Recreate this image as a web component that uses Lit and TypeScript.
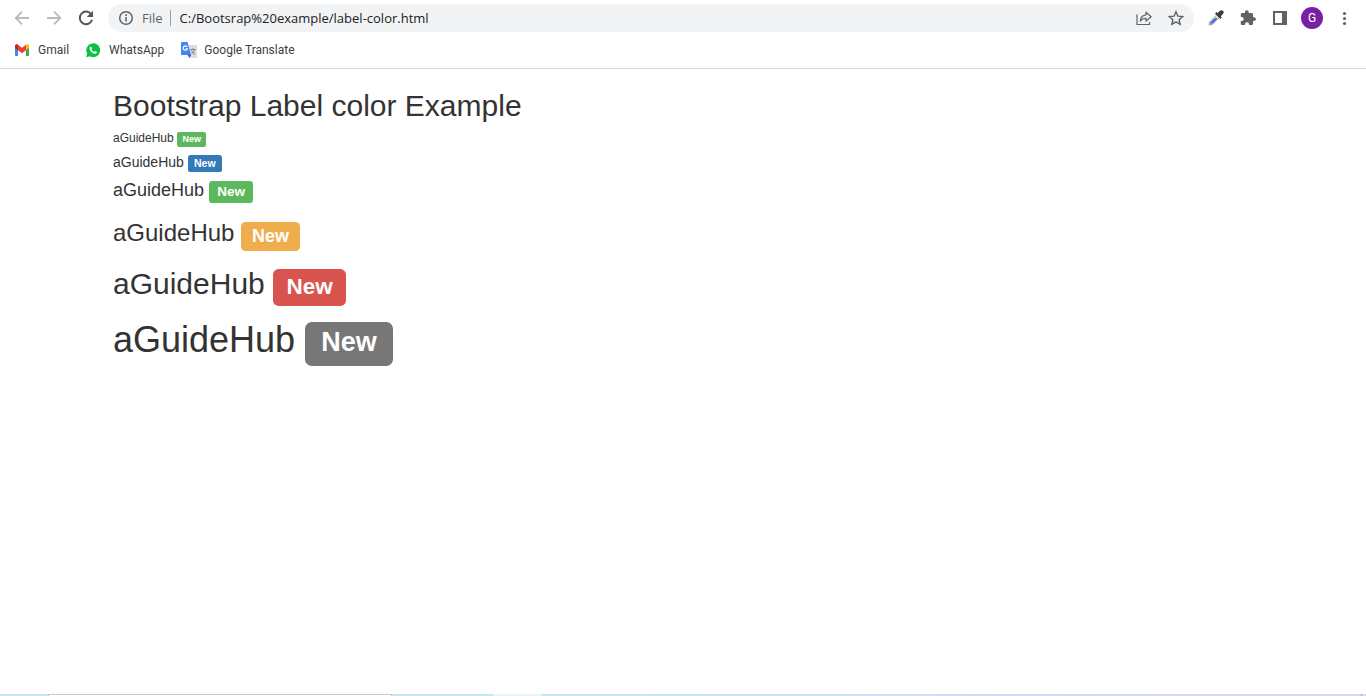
import { LitElement, html, css, svg } from "lit";
import { customElement, property } from "lit/decorators.js";

const icons = {
  back: svg`<path d="M17 10H4M10 3.700 3.700 10l6.300 6.300" fill="none" stroke="#babcbe" stroke-width="1.800"/>`,
  forward: svg`<path d="M3 10H16M10 3.700 16.300 10 10 16.300" fill="none" stroke="#babcbe" stroke-width="1.800"/>`,
  reload: svg`<path d="M15.300 6.300A6.300 6.300 0 1 0 16.100 11.800" fill="none" stroke="#54585d" stroke-width="2"/><path d="M17 2.700V9H10.700Z" fill="#54585d"/>`,
  info: svg`<circle cx="10" cy="10" r="6.300" fill="none" stroke="#5f6368" stroke-width="1.500"/><path d="M10 9v4.500M10 6.300v1.700" stroke="#5f6368" stroke-width="1.600"/>`,
  share: svg`<path d="M3 6.500v10h12.500V14" fill="none" stroke="#5f6368" stroke-width="1.200"/><path d="M12 4.200 17.200 8.700 12 13v-2.600c-2.700 0-4.500.8-5.800 2.700.3-3.300 2.300-5.800 5.800-6.300Z" fill="none" stroke="#5f6368" stroke-width="1.200" stroke-linejoin="round"/>`,
  star: svg`<path d="m10 3.700 1.900 4.400 4.800.4-3.600 3.200 1.100 4.700-4.200-2.500-4.200 2.500 1.100-4.700-3.600-3.200 4.800-.4Z" fill="none" stroke="#5f6368" stroke-width="1.400"/>`,
  dropper: svg`<path d="m3 17 .8-3.200 7-7 2.600 2.600-7 7Z" fill="#dfe3ec" stroke="#8a8d94" stroke-width=".8"/><path d="m4 16 .8-1.900 4-3.900h3l-5 5Z" fill="#3b63d8"/><path d="m9 5.500 1.500-1.500 1.200 1.100 2-2.100c1-1 2.500-.9 3.300-.2.900.9.900 2.300-.1 3.300l-2.100 2.100 1 1.200-1.500 1.500Z" fill="#383b40"/>`,
  puzzle: svg`<path d="M16 9.200h-1V6.300c0-.8-.6-1.400-1.400-1.400h-2.900v-.8a1.900 1.900 0 0 0-3.800 0v.8H4.200c-.8 0-1.400.6-1.400 1.400V9h.9a2 2 0 0 1 0 4h-.9v2.700c0 .8.600 1.400 1.400 1.400H7v-.8a2 2 0 0 1 4 0v.8h2.600c.8 0 1.400-.6 1.400-1.400V13h1a1.900 1.900 0 0 0 0-3.800Z" fill="#5f6368"/>`,
  panel: svg`<path d="M3 3h14v14H3Z M5 5v10h7V5Z" fill="#5f6368" fill-rule="evenodd"/>`,
  menu: svg`<g fill="#5f6368"><circle cx="10.500" cy="5.500" r="1.600"/><circle cx="10.500" cy="10.500" r="1.600"/><circle cx="10.500" cy="15.500" r="1.600"/></g>`,
  gmail: svg`<path d="M3 5.500h3V16H4a1 1 0 0 1-1-1Z" fill="#4285f4"/><path d="M14 5.500h3V15a1 1 0 0 1-1 1h-2Z" fill="#34a853"/><path d="M3 6c0-1.700 1.700-2.300 3-1.300v5.500L3 8Z" fill="#c5221f"/><path d="m6 4.700 4 3 4-3v5.500l-4 3-4-3Z" fill="#ea4335"/><path d="M14 4.700c1.300-1 3-.4 3 1.300v2l-3 2.200Z" fill="#fbbc04"/>`,
  whatsapp: svg`<path d="M3.200 17.200 4.200 13.600A6.900 6.900 0 1 1 6.800 16.200Z" fill="#0ac143"/><path d="M7.900 6.500c-.6 0-1.300.8-1.300 1.900 0 2.200 3.300 5.300 5.400 5.300 1.200 0 2-.8 2-1.700l-2-1.100-1 1c-1-.4-2-1.300-2.500-2.400l.7-.9Z" fill="#fff"/>`,
  translate: svg`<path d="M9 5h9.200c.4 0 .8.400.8.800v11.400c0 .4-.4.800-.8.800H11.500Z" fill="#dadce0"/><path d="M3.800 2h5.700L13 15H3.800a.8.800 0 0 1-.8-.8V2.800c0-.4.400-.8.800-.8Z" fill="#4285f4"/><path d="M9.500 15H13l-1.500 3Z" fill="#2a56c6"/><path d="M9.300 7A2.200 2.200 0 1 0 9.500 8.700H7.500" fill="none" stroke="#fff" stroke-width="1.100"/><path d="M12.500 9.500h5M15 8.300v1.200M16.500 9.500c-.4 2-1.800 3.500-3 4.300M13.500 10.500c.6 1.600 1.900 2.800 3.500 3.800" fill="none" stroke="#607d8b" stroke-width=".9"/>`,
};

const glyph = (name: keyof typeof icons) =>
  html`<svg viewBox="0 0 20 20" width="20" height="20" aria-hidden="true">${icons[name]}</svg>`;

@customElement("browser-bar")
export class BrowserBar extends LitElement {
  static styles = css`
    :host {
      display: block;
      border-bottom: 1px solid #dadce0;
      font-family: "Open Sans", "Noto Sans", sans-serif;
      color: #3c4043;
    }
    svg { display: block; }
    button {
      display: grid;
      place-items: center;
      width: 28px;
      height: 28px;
      padding: 0;
      border: 0;
      background: none;
    }
    .toolbar {
      display: flex;
      gap: 8px;
      padding: 4px 8px 0;
    }
    .group {
      display: flex;
      gap: 4px;
    }
    .omnibox {
      display: flex;
      align-items: center;
      flex: 1;
      min-width: 0;
      height: 28px;
      padding: 0 4px 0 8px;
      border-radius: 14px;
      background: #f1f3f4;
    }
    .scheme {
      padding: 0 7px 0 6px;
      font-size: 13px;
      line-height: 16px;
      color: #5f6368;
      border-right: 1px solid #9aa0a6;
    }
    .address {
      flex: 1;
      min-width: 0;
      height: 24px;
      padding: 0 0 0 9px;
      border: 0;
      outline: 0;
      background: none;
      font: 13px "Open Sans", "Noto Sans", sans-serif;
      color: #202124;
    }
    .avatar {
      width: 22px;
      height: 22px;
      border-radius: 50%;
      background: #7b1fa2;
      color: #fff;
      font: 12px/22px Roboto, sans-serif;
      text-align: center;
    }
    .bookmarks {
      display: flex;
      gap: 14px;
      height: 36px;
      padding: 0 12px;
      align-items: center;
    }
    .bookmark {
      display: flex;
      align-items: center;
      gap: 6px;
      font-family: Roboto, "Open Sans", sans-serif;
      font-size: 12px;
      line-height: 20px;
      color: inherit;
      text-decoration: none;
    }
  `;

  render() {
    return html`
      <div class="toolbar">
        <div class="group">
          <button aria-label="Back">${glyph("back")}</button>
          <button aria-label="Forward">${glyph("forward")}</button>
          <button aria-label="Reload">${glyph("reload")}</button>
        </div>
        <div class="omnibox">
          ${glyph("info")}
          <label class="scheme" for="address">File</label>
          <input class="address" id="address" type="text" spellcheck="false"
            value="C:/Bootsrap%20example/label-color.html" />
          <div class="group">
            <button aria-label="Share">${glyph("share")}</button>
            <button aria-label="Bookmark this tab">${glyph("star")}</button>
          </div>
        </div>
        <div class="group">
          <button aria-label="Color picker">${glyph("dropper")}</button>
          <button aria-label="Extensions">${glyph("puzzle")}</button>
          <button aria-label="Side panel">${glyph("panel")}</button>
          <button aria-label="Profile"><span class="avatar">G</span></button>
          <button aria-label="Menu">${glyph("menu")}</button>
        </div>
      </div>
      <nav class="bookmarks">
        <a class="bookmark" href="#gmail">${glyph("gmail")}Gmail</a>
        <a class="bookmark" href="#whatsapp">${glyph("whatsapp")}WhatsApp</a>
        <a class="bookmark" href="#translate">${glyph("translate")}Google Translate</a>
      </nav>
    `;
  }
}

@customElement("color-label")
export class ColorLabel extends LitElement {
  @property() kind = "default";

  static styles = css`
    .label {
      padding: 0.2em 0.6em 0.3em;
      border-radius: 0.25em;
      font-size: 75%;
      font-weight: 700;
      line-height: 1;
      color: #fff;
      white-space: nowrap;
    }
    .default { background: #777; }
    .primary { background: #337ab7; }
    .success { background: #5cb85c; }
    .warning { background: #f0ad4e; }
    .danger { background: #d9534f; }
  `;

  render() {
    return html`<span class="label ${this.kind}"><slot></slot></span>`;
  }
}

@customElement("app-root")
export class AppRoot extends LitElement {
  static styles = css`
    :host {
      display: flex;
      flex-direction: column;
      min-height: 100vh;
      background: #fff;
      font-family: "Liberation Sans", Arial, sans-serif;
      color: #333;
    }
    .container {
      flex: 1;
      box-sizing: border-box;
      width: 100%;
      max-width: 1170px;
      margin: 0 auto;
      padding: 0 15px;
      display: flow-root;
    }
    h1, h2, h3, h4, h5, h6 {
      font-weight: 500;
      line-height: 1.1;
    }
    h1, h2, h3 { margin: 20px 0 10px; }
    h4, h5, h6 { margin: 10px 0; }
    h1 { font-size: 36px; }
    h2 { font-size: 30px; }
    h3 { font-size: 24px; }
    h4 { font-size: 18px; }
    h5 { font-size: 14px; }
    h6 { font-size: 12px; }
    .taskbar {
      display: flex;
      height: 2px;
      background: linear-gradient(90deg, #cde6ee 0 45%, #d3dcea 75%, #d6d9e8);
    }
    .search {
      box-sizing: border-box;
      width: 344px;
      margin-left: 48px;
      border: 1px solid #c8c8c8;
      border-bottom: 0;
      background: #fff;
    }
    .active {
      width: 48px;
      margin-left: 101px;
      background: #ebf5f8;
    }
    .edge {
      width: 1px;
      margin: 0 4px 0 auto;
      background: #a5a9b8;
    }
  `;

  render() {
    return html`
      <browser-bar></browser-bar>
      <main class="container">
        <h2>Bootstrap Label color Example</h2>
        <h6>aGuideHub <color-label kind="success">New</color-label></h6>
        <h5>aGuideHub <color-label kind="primary">New</color-label></h5>
        <h4>aGuideHub <color-label kind="success">New</color-label></h4>
        <h3>aGuideHub <color-label kind="warning">New</color-label></h3>
        <h2>aGuideHub <color-label kind="danger">New</color-label></h2>
        <h1>aGuideHub <color-label kind="default">New</color-label></h1>
      </main>
      <footer class="taskbar">
        <div class="search"></div>
        <div class="active"></div>
        <div class="edge"></div>
      </footer>
    `;
  }
}
